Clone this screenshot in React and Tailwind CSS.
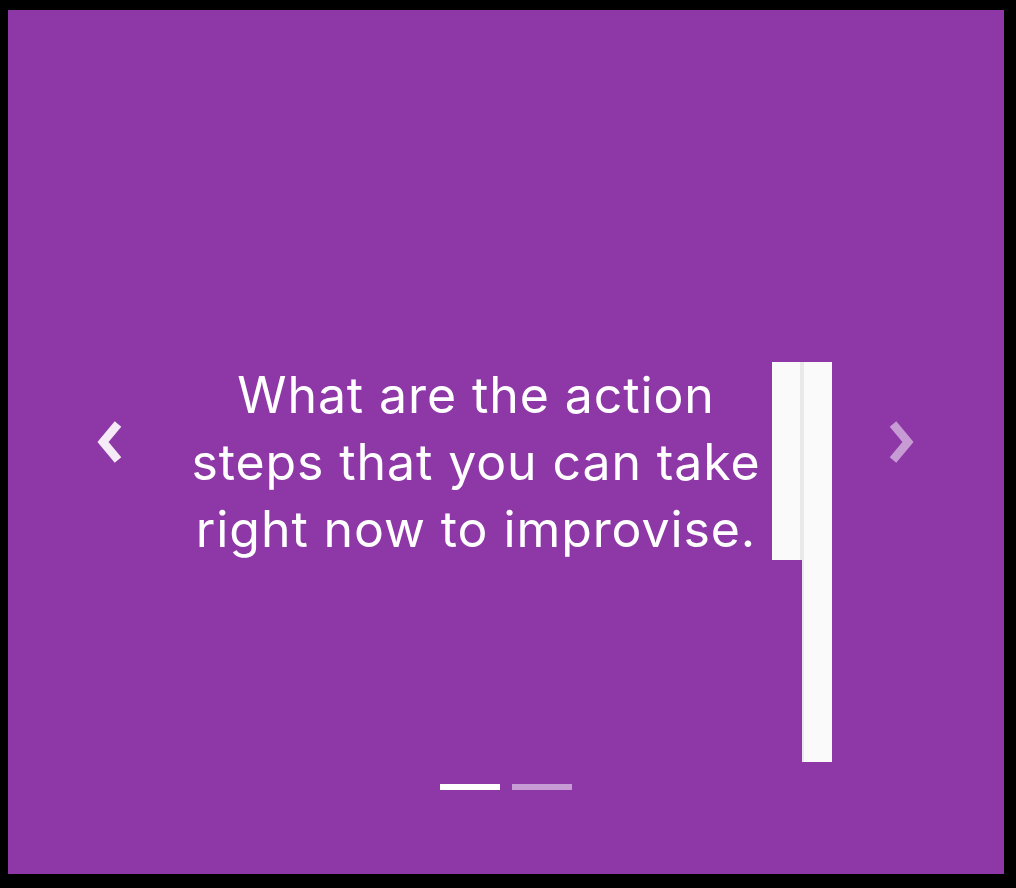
import React from "react";

function Chevron({ dir, className }) {
  const pts = dir === "left" ? "22,3 7,21 22,39" : "6,3 21,21 6,39";
  return (
    <svg width="28" height="42" viewBox="0 0 28 42" className={className}>
      <polyline
        points={pts}
        fill="none"
        stroke="currentColor"
        strokeWidth="8.5"
        strokeLinecap="butt"
        strokeLinejoin="miter"
      />
    </svg>
  );
}

export default function App() {
  return (
    <div className="w-[1016px] h-[888px] bg-black pt-[10px] pl-[8px]">
      <div className="relative w-[996px] h-[864px] bg-[#8e38a8] flex flex-col">
        <div className="flex flex-row items-start pt-[352px] pl-[172px]">
          <div
            className="w-[592px] text-center text-white text-[50px] leading-[67px] tracking-[0.9px] whitespace-nowrap"
            style={{ fontFamily: "Inter, 'Noto Sans', sans-serif" }}
          >
            What are the action
            <br />
            steps that you can take
            <br />
            right now to improvise.
          </div>
          <div className="w-[30px] h-[198px] bg-[#fafafa] border-r-2 border-[#e9e9e9]" />
          <div className="w-[30px] h-[400px] bg-[#fafafa] border-l-2 border-[#e9e9e9]" />
        </div>
        <div className="flex flex-row justify-center gap-[12px] pt-[22px]">
          <div className="w-[60px] h-[6px] bg-white" />
          <div className="w-[60px] h-[6px] bg-white/50" />
        </div>
        <Chevron dir="left" className="absolute left-[88px] top-[411px] text-white/90" />
        <Chevron dir="right" className="absolute left-[879px] top-[411px] text-white/50" />
      </div>
    </div>
  );
}
